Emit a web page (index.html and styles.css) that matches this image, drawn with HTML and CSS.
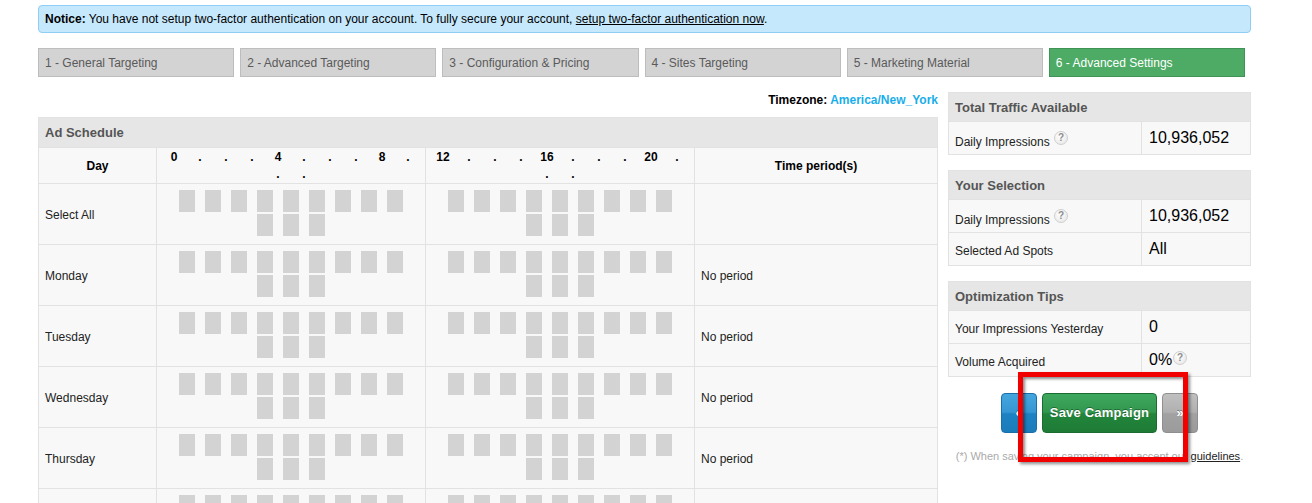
FILE: index.html
```html
<!DOCTYPE html>
<html lang="en">
<head>
    <meta charset="UTF-8">
    <title>Edit Campaign - Advanced Settings</title>
    <link rel="stylesheet" href="styles.css">
</head>
<body>
    <div class="wrap">
        <div class="notice">
            <strong>Notice:</strong> You have not setup two-factor authentication on your account. To fully secure your account, <a href="#">setup two-factor authentication now</a>.
        </div>

        <ul class="steps">
            <li>1 - General Targeting</li>
            <li>2 - Advanced Targeting</li>
            <li>3 - Configuration &amp; Pricing</li>
            <li>4 - Sites Targeting</li>
            <li>5 - Marketing Material</li>
            <li class="current">6 - Advanced Settings</li>
        </ul>

        <div class="content">
            <div class="main-col">
                <div class="timezone">Timezone: <a href="#">America/New_York</a></div>
                <div class="schedule">
                    <div class="box-title schedule-title">Ad Schedule</div>
                    <div class="schedule-grid" id="scheduleGrid">
                        <div class="cell head">Day</div>
                        <div class="cell head hours" id="hoursAm"></div>
                        <div class="cell head hours" id="hoursPm"></div>
                        <div class="cell head">Time period(s)</div>
                    </div>
                </div>
            </div>

            <div class="side-col">
                <div class="stat-box">
                    <div class="box-title">Total Traffic Available</div>
                    <div class="stat-row">
                        <span class="stat-label">Daily Impressions <i class="help">?</i></span>
                        <span class="stat-value">10,936,052</span>
                    </div>
                </div>

                <div class="stat-box">
                    <div class="box-title">Your Selection</div>
                    <div class="stat-row">
                        <span class="stat-label">Daily Impressions <i class="help">?</i></span>
                        <span class="stat-value">10,936,052</span>
                    </div>
                    <div class="stat-row">
                        <span class="stat-label">Selected Ad Spots</span>
                        <span class="stat-value">All</span>
                    </div>
                </div>

                <div class="stat-box">
                    <div class="box-title">Optimization Tips</div>
                    <div class="stat-row">
                        <span class="stat-label">Your Impressions Yesterday</span>
                        <span class="stat-value">0</span>
                    </div>
                    <div class="stat-row">
                        <span class="stat-label">Volume Acquired</span>
                        <span class="stat-value">0%<i class="help">?</i></span>
                    </div>
                </div>

                <div class="actions">
                    <div class="buttons">
                        <a href="#" class="btn btn-blue">&laquo;</a>
                        <a href="#" class="btn btn-green">Save Campaign</a>
                        <a href="#" class="btn btn-gray">&raquo;</a>
                    </div>
                    <p class="terms">(*) When saving your campaign, you accept our <a href="#">guidelines</a>.</p>
                    <div class="mark"></div>
                </div>
            </div>
        </div>
    </div>

    <script>
        const days = ['Select All', 'Monday', 'Tuesday', 'Wednesday', 'Thursday', 'Friday', 'Saturday', 'Sunday'];
        const grid = document.getElementById('scheduleGrid');

        // hour ruler: every 4th hour gets a number, the rest a dot
        function hourLabels(start) {
            let html = '';
            for (let h = start; h < start + 12; h++) {
                html += `<span>${h % 4 === 0 ? h : '.'}</span>`;
            }
            return html;
        }

        function slots() {
            return '<span class="slot"></span>'.repeat(12);
        }

        document.getElementById('hoursAm').innerHTML = hourLabels(0);
        document.getElementById('hoursPm').innerHTML = hourLabels(12);

        days.forEach(day => {
            grid.insertAdjacentHTML('beforeend',
                `<div class="cell day">${day}</div>` +
                `<div class="cell slots">${slots()}</div>` +
                `<div class="cell slots">${slots()}</div>` +
                `<div class="cell period">${day === 'Select All' ? '' : 'No period'}</div>`);
        });
    </script>
</body>
</html>
```

FILE: styles.css
```css
body {
    margin: 0;
    font-family: "Liberation Sans", Arial, sans-serif;
    font-size: 12px;
    color: #222;
    background: #fff;
}
a {
    color: inherit;
}
.wrap {
    width: 1213px;
    padding: 5px 0 0 38px;
}
.notice {
    height: 26px;
    line-height: 26px;
    padding: 0 6px;
    border: 1px solid #8ecdf4;
    border-radius: 4px;
    background: #c6e8fc;
    color: #000;
}
.notice a {
    color: #000;
}

/* wizard steps */
.steps {
    display: flex;
    margin: 15px 0 0;
    padding: 0;
    list-style: none;
}
.steps li {
    flex: 1;
    height: 27px;
    line-height: 28px;
    margin-right: 6px;
    padding-left: 6px;
    border: 1px solid #bdbdbd;
    background: #d3d3d3;
    color: #5a5a5a;
}
.steps li.current {
    border-color: #3f9357;
    background: #4dab66;
    color: #fff;
}

.content {
    display: flex;
    gap: 10px;
    margin-top: 15px;
}
.main-col {
    width: 900px;
}
.side-col {
    width: 303px;
}

.timezone {
    line-height: 16px;
    margin-bottom: 9px;
    text-align: right;
    font-weight: bold;
    color: #000;
}
.timezone a {
    color: #19aee9;
    text-decoration: none;
}

.box-title {
    height: 27px;
    line-height: 27px;
    padding: 1px 0 0 6px;
    background: #e6e6e6;
    color: #555;
    font-size: 13px;
    font-weight: bold;
}

/* schedule table */
.schedule {
    border: 1px solid #e2e2e2;
    border-bottom: 0;
}
.schedule-title {
    height: 29px;
    line-height: 29px;
    padding-top: 0;
}
.schedule-grid {
    display: grid;
    grid-template-columns: 117px 268px 268px 1fr;
    grid-template-rows: 35px;
    grid-auto-rows: 60px;
    gap: 1px;
    padding-top: 1px;
    background: #e2e2e2;
}
.cell {
    background: #f8f8f8;
}
.cell.head {
    display: flex;
    align-items: center;
    justify-content: center;
    font-weight: bold;
    color: #000;
}
.cell.head.hours {
    flex-wrap: wrap;
    align-items: flex-start;
    align-content: flex-start;
    padding-top: 1px;
}
.hours span {
    width: 26px;
    line-height: 17px;
    text-align: center;
}
.cell.day,
.cell.period {
    display: flex;
    align-items: center;
    padding: 1px 0 0 6px;
}
.cell.slots {
    display: flex;
    flex-wrap: wrap;
    justify-content: center;
    align-content: flex-start;
    gap: 2px 10px;
    padding: 6px 12px 0;
}
.slot {
    width: 16px;
    height: 22px;
    background: #d3d3d3;
}

/* traffic boxes */
.stat-box {
    border: 1px solid #e2e2e2;
}
.stat-box + .stat-box {
    margin-top: 15px;
}
.stat-row {
    display: flex;
    align-items: center;
    height: 32px;
    border-top: 1px solid #e2e2e2;
    background: linear-gradient(#e2e2e2, #e2e2e2) 192px 0 / 1px 100% no-repeat, #f8f8f8;
}
.stat-label {
    position: relative;
    top: 2px;
    width: 187px;
    padding-left: 6px;
}
.stat-value {
    padding-left: 7px;
    font-size: 16px;
    color: #000;
}
.help {
    display: inline-block;
    overflow: hidden;
    box-sizing: border-box;
    width: 14px;
    height: 14px;
    margin-left: 1px;
    border: 1px solid #cfcfcf;
    border-radius: 50%;
    background: radial-gradient(circle at 40% 35%, #fff, #e4e4e4);
    color: #8e8e8e;
    font-size: 10px;
    font-style: normal;
    font-weight: bold;
    line-height: 12px;
    text-align: center;
    vertical-align: 1px;
}
.stat-value .help {
    vertical-align: 0;
}

/* save buttons */
.actions {
    position: relative;
    padding-top: 16px;
    text-align: center;
}
.buttons {
    display: flex;
    justify-content: center;
    gap: 5px;
}
.btn {
    box-sizing: border-box;
    width: 36px;
    height: 40px;
    line-height: 38px;
    border: 1px solid;
    border-radius: 4px;
    color: #fff;
    font-size: 13px;
    font-weight: bold;
    text-decoration: none;
    text-shadow: 0 -1px 0 rgba(0, 0, 0, 0.35);
}
.btn-blue {
    border-color: #1a6fa8;
    background: linear-gradient(#45a6de 0%, #3596d3 48%, #1e82c3 52%, #1b7cba 100%);
}
.btn-green {
    width: 115px;
    border-color: #1b6c30;
    background: linear-gradient(#3ea75e 0%, #32974f 48%, #22853b 52%, #1e7b36 100%);
    letter-spacing: 0.2px;
}
.btn-gray {
    border-color: #8f8f8f;
    background: linear-gradient(#c0c0c0 0%, #b0b0b0 48%, #a2a2a2 52%, #9b9b9b 100%);
}
.terms {
    margin: 17px 0 0;
    font-size: 11px;
    color: #aaa;
}
.terms a {
    color: #222;
}
.mark {
    position: absolute;
    top: -5px;
    left: 70px;
    width: 160px;
    height: 80px;
    border: 5px solid #f20000;
    box-shadow: 2px 2px 3px rgba(0, 0, 0, 0.45), inset 2px 2px 3px rgba(0, 0, 0, 0.45);
}
```
